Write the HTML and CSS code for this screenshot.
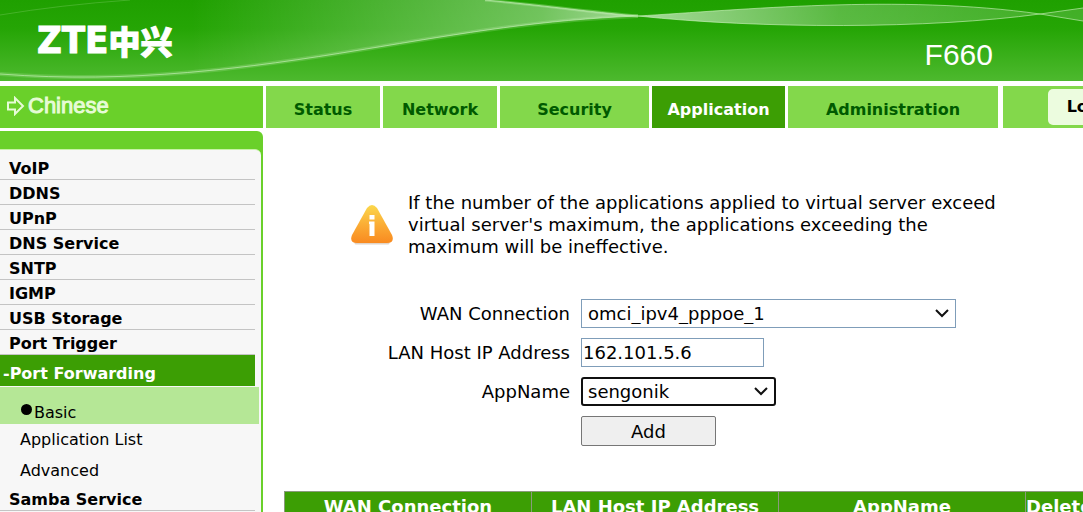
FILE: index.html
```
<!DOCTYPE html>
<html lang="en">
<head>
  <meta charset="UTF-8">
  <meta name="viewport" content="width=device-width, initial-scale=1.0">
  <title>F660</title>
  <link rel="stylesheet" href="styles.css">
</head>
<body>
  <div class="page">
    <header class="banner">
      <svg class="waves" viewBox="0 0 1083 81" preserveAspectRatio="none" aria-hidden="true">
        <defs>
          <linearGradient id="left" x1="0" x2="1" y1="0" y2="0">
            <stop offset="0.3" stop-color="#fff" stop-opacity="0"/>
            <stop offset="0.6" stop-color="#fff" stop-opacity="0.2"/>
            <stop offset="0.85" stop-color="#fff" stop-opacity="0.36"/>
            <stop offset="1" stop-color="#fff" stop-opacity="0.6"/>
          </linearGradient>
          <linearGradient id="right" x1="0" x2="1" y1="0" y2="0">
            <stop offset="0" stop-color="#fff" stop-opacity="0.6"/>
            <stop offset="0.5" stop-color="#fff" stop-opacity="0.25"/>
            <stop offset="1" stop-color="#fff" stop-opacity="0.15"/>
          </linearGradient>
        </defs>
        <path d="M0 74C130 84 250 68 360 50C470 32 540 20 638 16C590 12 540 5 485 0H0Z" fill="url(#left)"/>
        <path d="M638 16C740 10 900 -6 1040 14C930 29 760 29 638 16Z" fill="url(#right)"/>
        <path d="M1040 14L1083 8V21Z" fill="#fff" fill-opacity="0.15"/>
        <g fill="none" stroke="#d2f5c4">
          <path d="M0 74C130 84 250 68 360 50C470 32 540 20 638 16" stroke-width="4" stroke-opacity="0.2"/>
          <path d="M485 0C540 5 590 12 638 16" stroke-width="3" stroke-opacity="0.3"/>
          <path d="M0 74C130 84 250 68 360 50C470 32 540 20 638 16C740 10 900 -6 1040 14L1083 21" stroke-opacity="0.6"/>
          <path d="M485 0C540 5 590 12 638 16C760 29 930 29 1040 14L1083 8" stroke-opacity="0.6"/>
          <path d="M0 15Q60 5 130 0" stroke-opacity="0.2"/>
        </g>
      </svg>
      <div class="logo">ZTE<span lang="zh-CN">中兴</span></div>
      <div class="model">F660</div>
    </header>

    <nav class="tabs">
      <a class="language" href="#">
        <svg width="18" height="20" viewBox="0 0 18 20" aria-hidden="true">
          <path d="M1 6.500H8V2L16 10L8 18V13.500H1Z" fill="none" stroke="#e6fbd6" stroke-width="2"/>
        </svg>
        Chinese
      </a>
      <a class="tab" href="#">Status</a>
      <a class="tab" href="#">Network</a>
      <a class="tab" href="#">Security</a>
      <a class="tab active" href="#">Application</a>
      <a class="tab" href="#">Administration</a>
      <div class="session"><button class="logout" type="button">Logout</button></div>
    </nav>

    <div class="content">
      <aside class="sidebar">
        <ul class="menu">
          <li><a href="#">VoIP</a></li>
          <li><a href="#">DDNS</a></li>
          <li><a href="#">UPnP</a></li>
          <li><a href="#">DNS Service</a></li>
          <li><a href="#">SNTP</a></li>
          <li><a href="#">IGMP</a></li>
          <li><a href="#">USB Storage</a></li>
          <li><a href="#">Port Trigger</a></li>
          <li class="open">
            <a href="#">-Port Forwarding</a>
            <ul class="submenu">
              <li class="current"><a href="#">Basic</a></li>
              <li><a href="#">Application List</a></li>
              <li><a href="#">Advanced</a></li>
            </ul>
          </li>
          <li><a href="#">Samba Service</a></li>
        </ul>
      </aside>

      <main>
        <div class="notice">
          <svg width="44" height="42" viewBox="0 0 44 42" aria-hidden="true">
            <defs>
              <linearGradient id="warn" x1="0" x2="0" y1="0" y2="1">
                <stop offset="0" stop-color="#fbd84c"/>
                <stop offset="0.5" stop-color="#fbae36"/>
                <stop offset="1" stop-color="#f98a20"/>
              </linearGradient>
            </defs>
            <path d="M6 39H38" fill="none" stroke="#e0d4c8" stroke-width="3" stroke-linecap="round"/>
            <path d="M17 4Q22 -2 27 4L42 31Q45 39 37 39H7Q-1 39 2 31Z" fill="url(#warn)"/>
            <path d="M19.500 11H24.500V15.500H19.500ZM19 17.500H24.500V32H19.500V20H19Z" fill="#fff"/>
          </svg>
          <p>If the number of the applications applied to virtual server exceed virtual server's maximum, the applications exceeding the maximum will be ineffective.</p>
        </div>

        <form class="rule">
          <label for="wan">WAN Connection</label>
          <select id="wan" class="wan">
            <option>omci_ipv4_pppoe_1</option>
          </select>
          <label for="host">LAN Host IP Address</label>
          <input id="host" class="host" type="text" value="162.101.5.6">
          <label for="app">AppName</label>
          <select id="app" class="app">
            <option>sengonik</option>
          </select>
          <button class="add" type="button">Add</button>
        </form>

        <table class="rules">
          <thead>
            <tr>
              <th>WAN Connection</th>
              <th>LAN Host IP Address</th>
              <th>AppName</th>
              <th class="narrow">Delete</th>
            </tr>
          </thead>
        </table>
      </main>
    </div>
  </div>
</body>
</html>
```
FILE: styles.css
```
* {
  box-sizing: border-box;
}
body {
  margin: 0;
  background-color: #fff;
  color: #000;
  font-family: Verdana, "DejaVu Sans", sans-serif;
  font-size: 18px;
}
a {
  color: inherit;
  text-decoration: none;
}
ul {
  list-style: none;
  margin: 0;
  padding: 0;
}
.page {
  display: flex;
  flex-direction: column;
  height: 100vh;
  overflow: hidden;
}

/* Banner */
.banner {
  position: relative;
  flex: none;
  display: flex;
  justify-content: space-between;
  align-items: center;
  height: 81px;
  padding: 0 90px 0 37px;
  background: linear-gradient(#1fa000, #25a505 35%, #4db92e);
  color: #fff;
}
.waves {
  position: absolute;
  top: 0;
  left: 0;
  width: 100%;
  height: 100%;
}
.logo {
  position: relative;
  display: flex;
  align-items: center;
  font: bold 38px/81px "Liberation Sans Narrow", "DejaVu Sans Condensed", sans-serif;
  -webkit-text-stroke: 1px #fff;
}
.logo span {
  font: 900 32px/81px "Noto Sans CJK SC", sans-serif;
}
.model {
  position: relative;
  padding-top: 28px;
  font: 30px/34px "Liberation Sans", Arial, sans-serif;
}

/* Tabs */
.tabs {
  flex: none;
  display: grid;
  grid-template-columns: 263px 114fr 114fr 149fr 133fr 210fr 82fr;
  gap: 3px;
  height: 42px;
  margin: 5px 0 3px;
}
.tabs > * {
  min-width: 0;
}
.language {
  display: flex;
  align-items: center;
  gap: 3px;
  padding: 0 7px 2px;
  background-color: #6ad02a;
  color: #e6fbd6;
  font: 22px/40px "Liberation Sans", Arial, sans-serif;
  -webkit-text-stroke: 1px #e6fbd6;
}
.tab {
  padding-top: 6px;
  background-color: #83d84b;
  color: #005a00;
  font-size: 16px;
  font-weight: bold;
  line-height: 36px;
  text-align: center;
}
.tab.active {
  background-color: #3c9e04;
  color: #fff;
}
.session {
  margin-left: 2px;
  padding: 3px 0 3px 45px;
  background-color: #83d84b;
  overflow: hidden;
}
.logout {
  width: 100px;
  height: 36px;
  padding: 0;
  border: 0;
  border-radius: 5px;
  background-color: #ecfcdf;
  color: #000;
  font: bold 16px/36px Verdana, "DejaVu Sans", sans-serif;
}

.content {
  display: flex;
  flex: 1;
  min-height: 0;
}

/* Side menu */
.sidebar {
  flex: none;
  width: 263px;
  padding-top: 18px;
  border-radius: 0 6px 0 0;
  background-color: #6ad02a;
}
.menu {
  height: 100%;
  margin-right: 2px;
  padding: 5px 6px 0 0;
  border-top: 1px solid #c8f2a8;
  border-radius: 0 6px 0 0;
  background-color: #f7f7f7;
  font-size: 16px;
  font-weight: bold;
}
.menu > li > a {
  display: block;
  height: 25px;
  padding-left: 9px;
  border-bottom: 1px solid #c4c4c4;
  line-height: 28px;
}
.menu > .open > a {
  height: 32px;
  padding: 3px 0 0 3px;
  border-bottom-color: #f7f7f7;
  background-color: #3c9e04;
  color: #fff;
  line-height: 32px;
}
.submenu {
  margin-right: -4px;
  font-weight: normal;
}
.submenu a {
  display: block;
  height: 31px;
  padding-left: 20px;
  line-height: 32px;
}
.submenu .current a {
  display: flex;
  gap: 2px;
  height: 37px;
  padding-top: 10px;
  background-color: #b5e796;
}
.current a::before {
  content: "";
  width: 11px;
  height: 11px;
  margin: 7px 0 0 1px;
  border-radius: 50%;
  background-color: #000;
}

/* Form area */
main {
  flex: 1;
  min-width: 0;
  padding-top: 61px;
  overflow: hidden;
}
.notice {
  display: flex;
  align-items: center;
  gap: 14px;
  margin: 0 80px 41px 87px;
}
.notice svg {
  flex: none;
}
.notice p {
  margin: 0;
  line-height: 22px;
}
.rule {
  display: grid;
  grid-template-columns: 307px 1fr;
  gap: 10px 11px;
}
.rule label {
  line-height: 29px;
  text-align: right;
}
.rule select,
.rule input {
  height: 29px;
  border: 1px solid #7f9db9;
  border-radius: 0;
  background-color: #fff;
  color: #000;
  font: 18px Verdana, "DejaVu Sans", sans-serif;
}
.rule select {
  padding: 0 6px;
  appearance: none;
  background-image: url("data:image/svg+xml,%3Csvg xmlns='http://www.w3.org/2000/svg' width='14' height='9'%3E%3Cpath d='M1 1L7 7L13 1' fill='none' stroke='%23111' stroke-width='2'/%3E%3C/svg%3E");
  background-repeat: no-repeat;
  background-position: right 6px center;
}
.rule .wan {
  width: 375px;
}
.rule .host {
  width: 183px;
  padding: 0 1px;
}
.rule .app {
  width: 195px;
  padding: 0 5px;
  border: 2px solid #101010;
  border-radius: 3px;
}
.add {
  grid-column: 2;
  width: 135px;
  height: 30px;
  border: 1px solid #767676;
  border-radius: 2px;
  background-color: #efefef;
  color: #000;
  font: 18px Verdana, "DejaVu Sans", sans-serif;
}

/* Rules table */
.rules {
  width: 900px;
  margin: 45px 0 0 21px;
  border-collapse: collapse;
  table-layout: fixed;
  background-color: #3c9e04;
  color: #fff;
}
.rules th {
  width: 247px;
  height: 30px;
  padding: 0 2px;
  border: 1px solid #8a9a7c;
  line-height: 28px;
  white-space: nowrap;
}
.rules .narrow {
  width: auto;
  padding: 0;
  text-align: left;
}
```
